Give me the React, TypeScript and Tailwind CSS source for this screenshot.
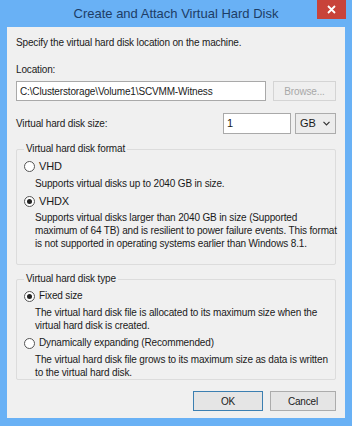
import React from "react";

const font = { fontFamily: '"Liberation Sans", Arial, sans-serif' };

function Radio({ checked }: { checked?: boolean }) {
  return (
    <span className="w-[11px] h-[11px] rounded-full border border-[#555] bg-white flex items-center justify-center shrink-0">
      {checked && <span className="w-[5px] h-[5px] rounded-full bg-[#222]" />}
    </span>
  );
}

function Group({ title, children, className }: { title: string; children: React.ReactNode; className?: string }) {
  return (
    <div className={`relative border border-[#dcdcdc] rounded-[2px] ${className ?? ""}`}>
      <span className="absolute -top-[8px] left-[7px] px-[2px] bg-[#f0f0f0] leading-[14px]">{title}</span>
      {children}
    </div>
  );
}

export default function App() {
  return (
    <div className="w-[352px] h-[426px] bg-[#69b1f5] flex flex-col text-[10px] tracking-[-0.15px] text-[#1a1a1a]" style={font}>
      {/* title bar */}
      <div className="relative h-[27px] flex items-center justify-center tracking-normal">
        <span className="text-[13px] text-[#1d3d66] pt-[1px]">Create and Attach Virtual Hard Disk</span>
        <div className="absolute right-[6px] top-0 w-[29px] h-[19px] bg-[#c8433a] flex items-center justify-center">
          <svg width="9" height="9" viewBox="0 0 9 9">
            <path d="M1 1 L8 8 M8 1 L1 8" stroke="#fff" strokeWidth="1.8" />
          </svg>
        </div>
      </div>

      {/* client area */}
      <div className="mx-[7px] mb-[8px] flex-1 bg-[#f0f0f0] px-[9px] pt-[9px] flex flex-col">
        <div className="leading-[14px]">Specify the virtual hard disk location on the machine.</div>

        <div className="mt-[13px] leading-[14px]">Location:</div>
        <div className="mt-[4px] flex gap-[7px]">
          <div className="w-[250px] h-[20px] bg-white border border-[#a9a9a9] px-[3px] flex items-center">
            C:\Clusterstorage\Volume1\SCVMM-Witness
          </div>
          <div className="flex-1 h-[20px] border border-[#d4d4d4] bg-[#efefef] text-[#a8a8a8] flex items-center justify-center">
            Browse...
          </div>
        </div>

        <div className="mt-[12px] flex items-center">
          <span className="flex-1">Virtual hard disk size:</span>
          <div className="w-[68px] h-[21px] bg-white border border-[#a9a9a9] px-[3px] flex items-center text-[11px]">1</div>
          <div className="ml-[4px] w-[41px] h-[21px] border border-[#acacac] bg-[#ececec] flex items-center justify-between pl-[4px] pr-[5px]">
            <span className="text-[11px]">GB</span>
            <svg width="7" height="5" viewBox="0 0 7 5">
              <path d="M0.5 0.8 L3.5 3.8 L6.5 0.8" stroke="#333" strokeWidth="1.2" fill="none" />
            </svg>
          </div>
        </div>

        <Group title="Virtual hard disk format" className="mt-[15px] h-[116px] pt-[8px] pl-[7px]">
          <div className="flex items-center gap-[4px] leading-[16px]">
            <Radio />
            <span className="text-[11px]">VHD</span>
          </div>
          <div className="pl-[11px] mt-[3px] leading-[14px]">Supports virtual disks up to 2040 GB in size.</div>
          <div className="flex items-center gap-[4px] leading-[16px] mt-[2px]">
            <Radio checked />
            <span className="text-[11px]">VHDX</span>
          </div>
          <div className="pl-[11px] mt-[2px] leading-[13px] whitespace-nowrap">
            Supports virtual disks larger than 2040 GB in size (Supported
            <br />
            maximum of 64 TB) and is resilient to power failure events. This format
            <br />
            is not supported in operating systems earlier than Windows 8.1.
          </div>
        </Group>

        <Group title="Virtual hard disk type" className="mt-[14px] h-[101px] pt-[8px] pl-[7px]">
          <div className="flex items-center gap-[4px] leading-[16px]">
            <Radio checked />
            <span>Fixed size</span>
          </div>
          <div className="pl-[11px] mt-[2px] leading-[13px] whitespace-nowrap">
            The virtual hard disk file is allocated to its maximum size when the
            <br />
            virtual hard disk is created.
          </div>
          <div className="flex items-center gap-[4px] leading-[16px] mt-[3px]">
            <Radio />
            <span>Dynamically expanding (Recommended)</span>
          </div>
          <div className="pl-[11px] mt-[2px] leading-[13px] whitespace-nowrap">
            The virtual hard disk file grows to its maximum size as data is written
            <br />
            to the virtual hard disk.
          </div>
        </Group>

        <div className="mt-[11px] flex justify-end gap-[7px]">
          <div className="w-[70px] h-[20px] border border-[#3c7fb1] bg-[#e5e5e5] flex items-center justify-center">OK</div>
          <div className="w-[66px] h-[20px] border border-[#acacac] bg-[#e5e5e5] flex items-center justify-center">Cancel</div>
        </div>
      </div>
    </div>
  );
}
